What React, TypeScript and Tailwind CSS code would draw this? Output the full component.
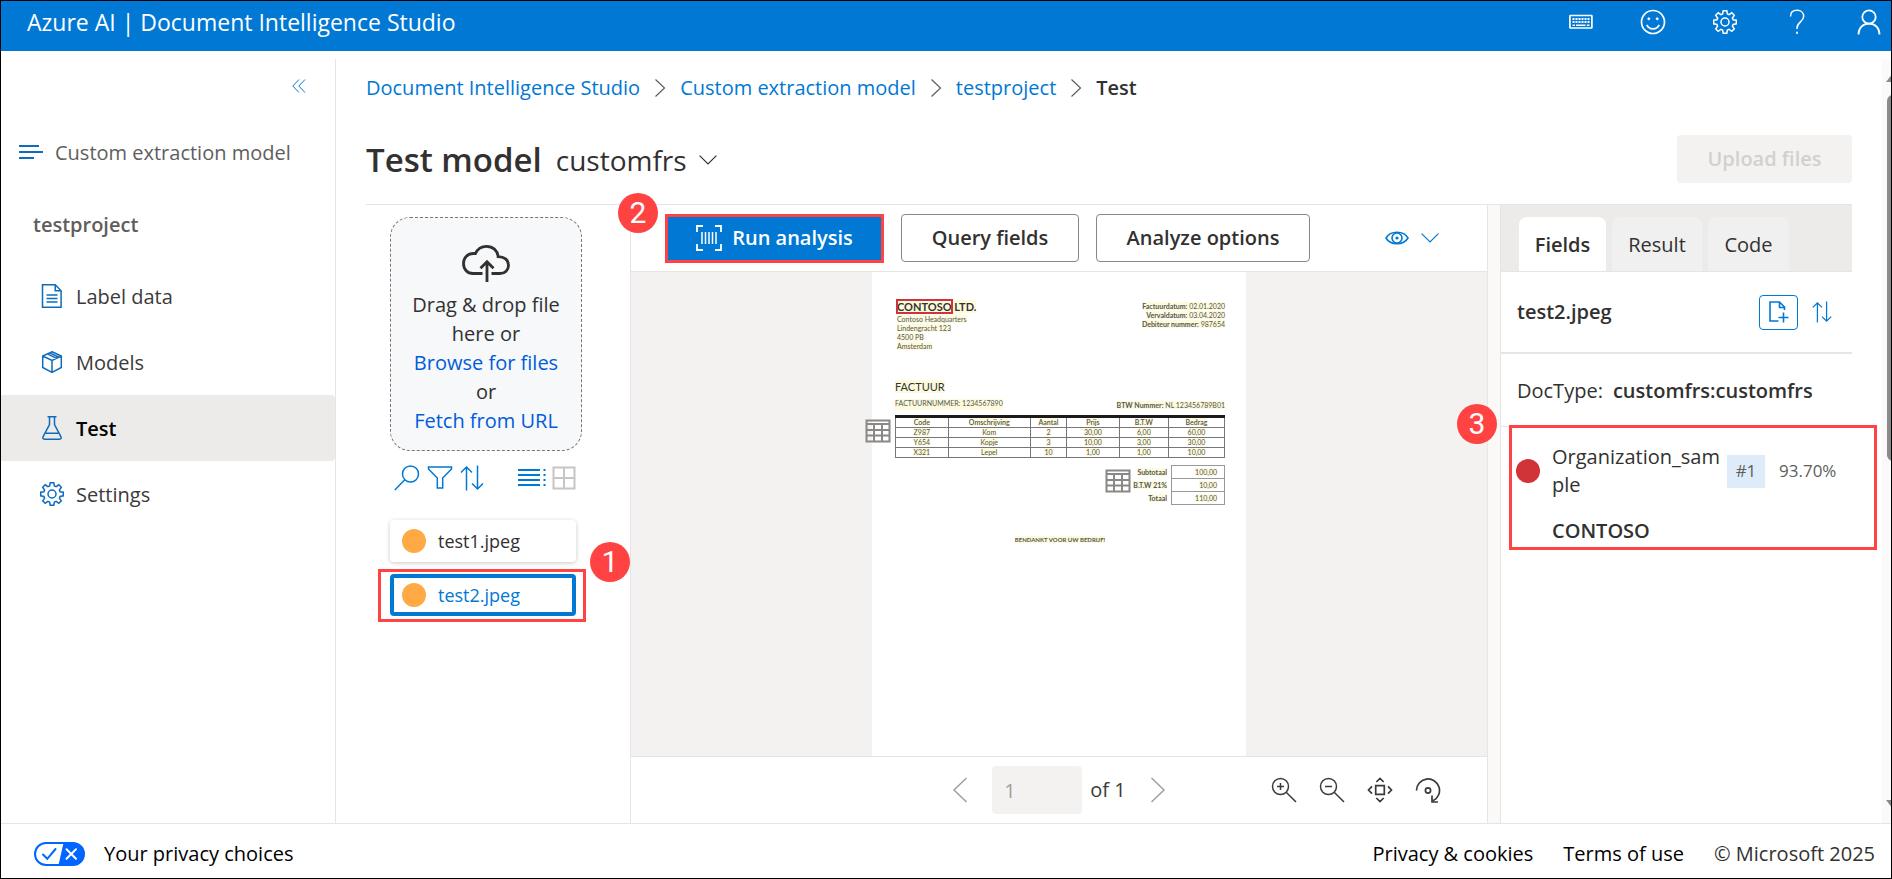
import React from 'react';

type IconProps = { className?: string };

const stroke = {
  fill: 'none',
  stroke: 'currentColor',
  strokeWidth: 1.5,
  strokeLinecap: 'butt' as const,
  strokeLinejoin: 'miter' as const,
};

const DoubleChevronLeft = () => (
  <svg width="14" height="14" viewBox="0 0 14 14" {...stroke} strokeWidth={1}>
    <path d="M7 .5.8 7 7 13.500M13 .5 6.800 7 13 13.500" />
  </svg>
);

const LinesIcon = () => (
  <svg width="24" height="16" viewBox="0 0 24 16" {...stroke} strokeWidth={2}>
    <path d="M0 1h20M0 7h24M0 13h15" />
  </svg>
);

const DocIcon = () => (
  <svg width="24" height="24" viewBox="0 0 24 24" {...stroke}>
    <path d="M2.500.8h12.700l5.900 6v16.400H2.500zM15.200.8v6h5.900M6.500 11h11M6.500 14.500h11M6.500 18h11" />
  </svg>
);

const BoxIcon = () => (
  <svg width="24" height="24" viewBox="0 0 24 24" {...stroke}>
    <path d="M12 1.800 21.300 6v11.500L12 22.300 2.700 17.500V6zM2.700 6 12 10.500 21.300 6M12 10.500v11.800M7.300 3.900l9.400 4.500M9.600 2.900l9.400 4.300" />
  </svg>
);

const FlaskIcon = () => (
  <svg width="24" height="24" viewBox="0 0 24 24" {...stroke}>
    <path d="M7.500.8h9M9.500.8v7.700L3 20.800c-.6 1.300 0 2.400 1.400 2.400h15.200c1.400 0 2-1.100 1.400-2.400L14.500 8.500V.8M5.500 17.200h13" />
  </svg>
);

const GearIcon = () => (
  <svg width="24" height="24" viewBox="0 0 24 24" {...stroke}>
    <circle cx="12" cy="12" r="4" />
    <path d="M10.200.8h3.600l.6 3.200 1.700.7 2.700-1.900 2.500 2.500-1.900 2.700.7 1.700 3.200.5v3.600l-3.200.6-.7 1.700 1.900 2.700-2.500 2.500-2.700-1.900-1.700.7-.6 3.100h-3.600l-.6-3.100-1.700-.7-2.700 1.900-2.500-2.500 1.900-2.700-.7-1.700-3.200-.6v-3.600L3.900 9.700 4.600 8 2.700 5.300l2.500-2.500 2.700 1.900L9.600 4z" />
  </svg>
);

const KeyboardIcon = () => (
  <svg width="24" height="16" viewBox="0 0 24 16" {...stroke}>
    <rect x=".9" y="1.500" width="22" height="12.500" rx=".6" strokeWidth={1.700} />
    <path d="M3.500 5h17M3.500 8h17" strokeWidth={2} strokeDasharray="2 1" />
    <path d="M3.500 11.200h2.500M7 11.200h9.500M17.800 11.200h2.700" strokeWidth={1.400} />
  </svg>
);

const SmileIcon = () => (
  <svg width="26" height="26" viewBox="0 0 26 26" {...stroke} strokeWidth={1.700}>
    <circle cx="13" cy="13" r="11.500" />
    <path d="M6.800 15.800c1.200 2.600 3.500 4 6.200 4s5-1.400 6.200-4" />
    <circle cx="8.800" cy="9.800" r="1" fill="currentColor" strokeWidth={1} />
    <circle cx="17.200" cy="9.800" r="1" fill="currentColor" strokeWidth={1} />
  </svg>
);

const HelpIcon = () => (
  <svg width="16" height="26" viewBox="0 0 16 26" {...stroke}>
    <path d="M1.500 7.500C1.500 3.800 4 1.300 8 1.300s6.700 2.500 6.700 6c0 5.300-6.700 5.900-6.700 11.700v1" />
    <path d="M8 22.800v2" strokeWidth={2} />
  </svg>
);

const PersonIcon = () => (
  <svg width="24" height="26" viewBox="0 0 24 26" {...stroke} strokeWidth={1.800}>
    <circle cx="12" cy="8" r="6.700" />
    <path d="M1.500 25.500c0-6.300 4.300-10.800 10.500-10.800s10.500 4.500 10.500 10.800" />
  </svg>
);

const CloudUpIcon = () => (
  <svg width="50" height="38" viewBox="0 0 50 38" {...stroke} strokeWidth={2.800}>
    <path d="M21.500 29.500H12C6.500 29.500 2.500 25.300 2.500 19.500 2.500 13.800 6.800 9.500 12.500 9.500h2C16.500 5 20.500 2.300 25.500 2.300c6.300 0 11 4.200 11.600 10.300 6.200 0 10.400 3.400 10.400 8.600 0 4.900-3.600 8.300-8.500 8.300h-8.500" />
    <path d="M26 38V18M19.500 24.300l6.500-6.500 6.500 6.500" />
  </svg>
);

const SearchIcon = () => (
  <svg width="26" height="26" viewBox="0 0 26 26" {...stroke}>
    <circle cx="16.500" cy="9" r="8" />
    <path d="M10.800 14.800.8 25" />
  </svg>
);

const FilterIcon = () => (
  <svg width="26" height="26" viewBox="0 0 26 26" {...stroke}>
    <path d="M1.500 2h23v2l-8.800 9v10h-5.400V13L1.500 4z" />
  </svg>
);

const SortIcon = ({ className }: IconProps) => (
  <svg className={className} viewBox="0 0 24 26" {...stroke}>
    <path d="M6.500 25.500V2M1 7.500 6.500 2 12 7.500M17.500.5V24M12 18.500l5.500 5.500 5.500-5.500" />
  </svg>
);

const ListIcon = () => (
  <svg width="28" height="24" viewBox="0 0 28 24" {...stroke} strokeWidth={2}>
    <path d="M0 4h22M0 9h22M0 14h22M0 19h22" />
    <path d="M26.500 3v18" strokeDasharray="2 3" />
  </svg>
);

const GridIcon = () => (
  <svg width="24" height="24" viewBox="0 0 24 24" {...stroke} strokeWidth={2}>
    <path d="M1.500 1.500h21v21h-21zM12 1.500v21M1.500 12h21" />
  </svg>
);

const ScanIcon = () => (
  <svg width="26" height="26" viewBox="0 0 26 26" {...stroke} strokeWidth={1.800}>
    <path d="M7 1H1v6M19 1h6v6M7 25H1v-6M19 25h6v-6" />
    <path d="M6 7v12M9.500 7v12M13 7v12M16.500 7v12M20 7v12" strokeWidth={1.500} />
  </svg>
);

const EyeIcon = () => (
  <svg width="24" height="16" viewBox="0 0 24 16" {...stroke} strokeWidth={1.600}>
    <path d="M1 8C3.200 4.200 7.200 2.300 12 2.300S20.800 4.200 23 8c-2.200 3.800-6.200 5.700-11 5.700S3.200 11.800 1 8z" />
    <circle cx="12" cy="8" r="5" />
    <circle cx="12" cy="8" r="1.600" fill="currentColor" stroke="none" />
  </svg>
);

const ChevronDown = () => (
  <svg width="18" height="10" viewBox="0 0 18 10" {...stroke} strokeWidth={1.200}>
    <path d="m.6.6 8.400 8.400 8.400-8.400" />
  </svg>
);

const ChevronRight = () => (
  <svg width="12" height="18" viewBox="0 0 12 18" {...stroke} strokeWidth={1.200}>
    <path d="m1.500.5 9 8.500-9 8.500" />
  </svg>
);

const PageLeft = () => (
  <svg width="16" height="26" viewBox="0 0 16 26" {...stroke}>
    <path d="M14.500 1 2 13l12.500 12" />
  </svg>
);

const PageRight = () => (
  <svg width="16" height="26" viewBox="0 0 16 26" {...stroke}>
    <path d="m1.500 1 12.500 12L1.500 25" />
  </svg>
);

const ZoomIcon = ({ plus }: { plus?: boolean }) => (
  <svg width="26" height="26" viewBox="0 0 26 26" {...stroke}>
    <circle cx="9.500" cy="9.500" r="8" />
    <path d="m15.200 15.200 9.800 9.800M6 9.500h7" />
    {plus && <path d="M9.500 6v7" />}
  </svg>
);

const FitIcon = () => (
  <svg width="26" height="26" viewBox="0 0 26 26" {...stroke} strokeWidth={1.700}>
    <path d="M8.700 8.700h8.600v8.600H8.700zM9.300 5 13 1.500 16.700 5M9.300 21l3.700 3.500 3.700-3.500M5 9.300 1.500 13 5 16.700M21 9.300l3.500 3.700-3.500 3.700" />
  </svg>
);

const RotateIcon = () => (
  <svg width="26" height="26" viewBox="0 0 26 26" {...stroke} strokeWidth={1.700}>
    <path d="M1.500 13.500a11.500 11.500 0 1 1 16.500 10.300M17 18.500V25h6" />
    <circle cx="13" cy="13.500" r="2.600" />
  </svg>
);

const AddPageIcon = () => (
  <svg width="20" height="22" viewBox="0 0 20 22" {...stroke} strokeWidth={1.600}>
    <path d="M9.500 20H1V1h9.500l5 5v3M10.500 1v5.500h5M14.500 11.500v10M9.500 16.500h10" />
  </svg>
);

const TableIcon = () => (
  <svg width="26" height="24" viewBox="0 0 26 24" {...stroke} strokeWidth={2} className="text-[#8a8886]">
    <path d="M1.500 1.500h23v21h-23zM1.500 5h23M1.500 11h23M1.500 16.500h23M9 5v17.500M17 5v17.500" />
  </svg>
);

const PrivacyIcon = () => (
  <svg width="51" height="24" viewBox="0 0 51 24">
    <rect x="1" y="1" width="49" height="22" rx="11" fill="#fff" stroke="#06f" strokeWidth="2" />
    <path d="M29.500 1H39a11 11 0 0 1 0 22H24.500z" fill="#06f" />
    <path d="m9 12.500 4.300 4.300L21.500 7" fill="none" stroke="#06f" strokeWidth="2" strokeLinecap="round" />
    <path d="m32.500 7.200 9.500 9.600M42 7.200l-9.500 9.600" stroke="#fff" strokeWidth="2" strokeLinecap="round" />
  </svg>
);

const Badge = ({ n, className }: { n: number; className: string }) => (
  <span
    className={`absolute z-10 flex size-10 items-center justify-center rounded-full bg-[#ff4343] font-['Roboto',sans-serif] text-[30px] leading-none text-white ${className}`}
  >
    {n}
  </span>
);

const navItems = [
  { label: 'Label data', icon: <DocIcon /> },
  { label: 'Models', icon: <BoxIcon /> },
  { label: 'Test', icon: <FlaskIcon />, active: true },
  { label: 'Settings', icon: <GearIcon /> },
];

const Sidebar = () => (
  <aside className="mt-2 flex w-[335px] shrink-0 flex-col border-r border-[#e5e5e5]">
    <div className="flex justify-end pt-5 pr-[29px]">
      <button aria-label="Collapse" className="text-[#0078d4]">
        <DoubleChevronLeft />
      </button>
    </div>
    <div className="mt-9 flex h-12 items-center gap-3 pl-[18px] text-[#0f6cbd]">
      <LinesIcon />
      <span className="text-[#605e5c]">Custom extraction model</span>
    </div>
    <div className="mt-6 flex h-12 items-center pl-8 font-semibold text-[#605e5c]">testproject</div>
    <nav className="mt-[14px]">
      {navItems.map((item) => (
        <a
          key={item.label}
          href="#"
          className={
            item.active
              ? 'flex h-[66px] items-center gap-3 rounded-r-sm bg-[#edebe9] pl-[39px] font-semibold text-black'
              : 'flex h-[66px] items-center gap-3 pl-[39px] text-[#3b3a39]'
          }
        >
          <span className="text-[#0f6cbd]">{item.icon}</span>
          <span className="pt-0.5">{item.label}</span>
        </a>
      ))}
    </nav>
  </aside>
);

const FilePanel = () => (
  <section className="w-[264px] shrink-0 pt-3 pl-6">
    <div className="flex h-[234px] w-[192px] flex-col items-center rounded-[20px] border border-dashed border-[#797775] bg-[#f6f8fa] pt-[26px] text-center leading-[29px] text-[#323130]">
      <CloudUpIcon />
      <p className="mt-2">
        Drag &amp; drop file
        <br />
        here or
      </p>
      <a href="#" className="text-[#015cda]">Browse for files</a>
      <p>or</p>
      <a href="#" className="text-[#015cda]">Fetch from URL</a>
    </div>
    <div className="mt-[14px] flex w-[186px] items-center justify-between pl-1 text-[#0078d4]">
      <div className="flex gap-[7px]">
        <button aria-label="Search"><SearchIcon /></button>
        <button aria-label="Filter"><FilterIcon /></button>
        <button aria-label="Sort"><SortIcon className="h-[26px] w-6" /></button>
      </div>
      <div className="flex items-center gap-[6px]">
        <button aria-label="List view"><ListIcon /></button>
        <button aria-label="Grid view" className="text-[#c8c6c4]"><GridIcon /></button>
      </div>
    </div>
    <ul className="mt-[29px] flex w-[186px] flex-col gap-3 text-[18px]">
      <li>
        <button className="flex h-[42px] w-full items-center gap-3 rounded-sm px-3 text-[#323130] shadow-[0_1px_4px_rgba(0,0,0,0.22)]">
          <span className="size-6 rounded-full bg-[#ffaa44]" />
          test1.jpeg
        </button>
      </li>
      <li className="relative">
        <button className="flex h-[42px] w-full items-center gap-3 rounded-sm border-4 border-[#0078d4] px-2 text-[#0078d4]">
          <span className="size-6 rounded-full bg-[#ffaa44]" />
          test2.jpeg
        </button>
        <span className="absolute -top-[5px] -right-[10px] -bottom-[6px] -left-3 border-3 border-[#ff4343]" />
        <Badge n={1} className="-top-8 left-[200px]" />
      </li>
    </ul>
  </section>
);

const Mark = ({ children }: { children: React.ReactNode }) => <span className="bg-[#fdfbdc]">{children}</span>;

const invoiceRows = [
  ['Z987', 'Kom', '2', '30,00', '6,00', '60,00'],
  ['Y654', 'Kopje', '3', '10,00', '3,00', '30,00'],
  ['X321', 'Lepel', '10', '1,00', '1,00', '10,00'],
];

const totals = [
  ['Subtotaal', '100,00'],
  ['B.T.W 21%', '10,00'],
  ['Totaal', '110,00'],
];

const Invoice = () => (
  <article className="flex w-[374px] flex-col bg-white pr-[21px] pl-[23px] font-['Lato',sans-serif] text-[7px] leading-[9px] text-[#555]">
    <div className="flex justify-between pt-7">
      <div>
        <h2 className="pl-0.5 text-[11px] leading-[13px] font-bold text-[#333]">
          <Mark>
            <span className="outline-2 -outline-offset-1 outline-[#d13438]">CONTOSO</span> LTD.
          </Mark>
        </h2>
        <address className="mt-0.5 pl-0.5 not-italic">
          <Mark>Contoso Headquarters</Mark>
          <br />
          <Mark>Lindengracht 123</Mark>
          <br />
          <Mark>4500 PB</Mark>
          <br />
          <Mark>Amsterdam</Mark>
        </address>
      </div>
      <div className="pt-0.5 text-right">
        <Mark><b>Factuurdatum:</b> 02.01.2020</Mark>
        <br />
        <Mark><b>Vervaldatum:</b> 03.04.2020</Mark>
        <br />
        <Mark><b>Debiteur nummer:</b> 987654</Mark>
      </div>
    </div>
    <h3 className="mt-7 text-[11px] leading-4 text-[#333]"><Mark>FACTUUR</Mark></h3>
    <div className="mt-1 flex justify-between">
      <Mark>FACTUURNUMMER: 1234567890</Mark>
      <span className="pt-0.5"><Mark><b>BTW Nummer:</b> NL 123456789B01</Mark></span>
    </div>
    <div className="relative mt-[5px]">
      <table className="w-full table-fixed border-collapse border border-[#777] text-center text-[7px] leading-[9px]">
        <colgroup>
          <col className="w-[16%]" />
          <col className="w-[25%]" />
          <col className="w-[11%]" />
          <col className="w-[16%]" />
          <col className="w-[15%]" />
          <col className="w-[17%]" />
        </colgroup>
        <thead>
          <tr className="border-t-3 border-[#1b1b1b]">
            {['Code', 'Omschrijving', 'Aantal', 'Prijs', 'B.T.W', 'Bedrag'].map((h) => (
              <th key={h} className="border-x border-b border-x-[#777] border-b-[#777] p-0 font-semibold"><Mark>{h}</Mark></th>
            ))}
          </tr>
        </thead>
        <tbody>
          {invoiceRows.map((row) => (
            <tr key={row[0]}>
              {row.map((cell, i) => (
                <td key={i} className="border border-[#777] p-0"><Mark>{cell}</Mark></td>
              ))}
            </tr>
          ))}
        </tbody>
      </table>
      <span className="absolute top-1 -left-[30px]"><TableIcon /></span>
    </div>
    <div className="mt-[7px] flex items-start justify-end gap-[2px]">
      <span className="pt-1"><TableIcon /></span>
      <table className="border-collapse text-right leading-3">
        <tbody>
          {totals.map(([label, value]) => (
            <tr key={label}>
              <th className="p-0 pr-1 font-bold"><Mark>{label}</Mark></th>
              <td className="w-[53px] border border-[#999] p-0 pr-[7px]"><Mark>{value}</Mark></td>
            </tr>
          ))}
        </tbody>
      </table>
    </div>
    <p className="mt-[30px] text-center text-[6px] font-bold"><Mark>BENDANKT VOOR UW BEDRIJF!</Mark></p>
  </article>
);

const Viewer = () => (
  <section className="relative flex min-w-0 flex-1 flex-col border-x border-[#e5e5e5]">
    <div className="flex h-[67px] items-center gap-[17px] border-b border-[#e5e5e5] pr-12 pl-[34px] font-semibold">
      <button className="flex h-[49px] w-[219px] items-center justify-center gap-[10px] border-3 border-[#ff4343] bg-[#0078d4] text-white">
        <ScanIcon />
        Run analysis
      </button>
      <button className="h-12 w-[178px] rounded-sm border border-[#8a8886] text-[#323130]">Query fields</button>
      <button className="h-12 w-[214px] rounded-sm border border-[#8a8886] text-[#323130]">Analyze options</button>
      <button aria-label="View options" className="ml-auto flex items-center gap-3 text-[#0078d4]">
        <EyeIcon />
        <ChevronDown />
      </button>
    </div>
    <Badge n={2} className="-top-3 -left-[13px]" />
    <div className="flex flex-1 justify-center bg-[#f3f2f1]">
      <Invoice />
    </div>
    <div className="relative flex h-[67px] items-center justify-center border-t border-[#e5e5e5]">
      <div className="flex items-center text-[#3b3a39]">
        <button aria-label="Previous page" className="text-[#a19f9d]"><PageLeft /></button>
        <input
          aria-label="Page"
          defaultValue="1"
          disabled
          className="ml-6 h-12 w-[90px] rounded-sm bg-[#f3f2f1] px-3 text-[#a19f9d]"
        />
        <span className="ml-2">of 1</span>
        <button aria-label="Next page" className="ml-6 text-[#a19f9d]"><PageRight /></button>
      </div>
      <div className="absolute right-[46px] flex gap-[22px] text-[#3b3a39]">
        <button aria-label="Zoom in"><ZoomIcon plus /></button>
        <button aria-label="Zoom out"><ZoomIcon /></button>
        <button aria-label="Fit to page"><FitIcon /></button>
        <button aria-label="Rotate"><RotateIcon /></button>
      </div>
    </div>
  </section>
);

const ResultPanel = () => (
  <section className="w-[352px] shrink-0 border-l border-[#e5e5e5] text-[#323130]">
    <div role="tablist" className="flex h-[67px] items-end gap-[6px] border-b border-[#e5e5e5] bg-[#edebe9] pl-[18px]">
      <button role="tab" aria-selected="true" className="h-[54px] w-[87px] rounded-t-lg bg-white pt-0.5 font-semibold">Fields</button>
      <button role="tab" aria-selected="false" className="h-[54px] w-[90px] rounded-t-lg bg-[#f0f0f0] pt-0.5">Result</button>
      <button role="tab" aria-selected="false" className="h-[54px] w-[81px] rounded-t-lg bg-[#f0f0f0] pt-0.5">Code</button>
    </div>
    <div className="flex h-[82px] items-center border-b-2 border-[#e5e5e5] pr-5 pl-4">
      <span className="flex-1 font-semibold">test2.jpeg</span>
      <button aria-label="Add field" className="flex h-[35px] w-[39px] items-center justify-center rounded-sm border border-[#0078d4] text-[#0078d4]">
        <AddPageIcon />
      </button>
      <button aria-label="Sort" className="ml-[14px] text-[#0078d4]">
        <SortIcon className="h-[22px] w-5" />
      </button>
    </div>
    <div className="flex h-[73px] items-center gap-[10px] border-b border-[#e5e5e5] pt-0.5 pl-4">
      <span>DocType:</span>
      <span className="font-semibold">customfrs:customfrs</span>
    </div>
    <div className="relative pt-4 pl-[15px]">
      <div className="flex items-center">
        <span className="size-6 shrink-0 rounded-full bg-[#d13438]" />
        <span className="ml-3 w-[168px] leading-7 break-all">Organization_sample</span>
        <span className="ml-[7px] flex h-[33px] w-[38px] items-center justify-center bg-[#deecf9] text-[17px] text-[#605e5c]">#1</span>
        <span className="ml-[14px] text-[17px] text-[#605e5c]">93.70%</span>
      </div>
      <div className="mt-[18px] pl-9 leading-7 font-semibold">CONTOSO</div>
      <span className="absolute -top-[2px] -right-[25px] left-2 h-[125px] border-3 border-[#ff4343]" />
      <Badge n={3} className="-top-[23px] -left-[44px]" />
    </div>
  </section>
);

export default function App() {
  return (
    <div className="flex min-h-screen flex-col overflow-hidden border border-black bg-white font-['Open_Sans','Noto_Sans',sans-serif] text-[20px] leading-7 text-[#323130]">
      <header className="flex h-[50px] items-center justify-between bg-[#0078d4] pr-[10px] pb-2 pl-[26px] text-white">
        <h1 className="text-[23px]">Azure AI | Document Intelligence Studio</h1>
        <div className="flex items-center">
          <button aria-label="Keyboard shortcuts" className="flex w-[72px] justify-center"><KeyboardIcon /></button>
          <button aria-label="Feedback" className="flex w-[72px] justify-center"><SmileIcon /></button>
          <button aria-label="Settings" className="flex w-[72px] justify-center"><GearIcon /></button>
          <button aria-label="Help" className="flex w-[72px] justify-center"><HelpIcon /></button>
          <button aria-label="Account" className="ml-6 flex w-6 justify-center"><PersonIcon /></button>
        </div>
      </header>

      <div className="flex flex-1">
        <Sidebar />
        <main className="flex min-w-0 flex-1 flex-col pl-[30px]">
          <nav aria-label="Breadcrumb" className="mt-[23px] flex items-center gap-[14px] text-[#0078d4]">
            <a href="#">Document Intelligence Studio</a>
            <span className="text-[#605e5c]"><ChevronRight /></span>
            <a href="#">Custom extraction model</a>
            <span className="text-[#605e5c]"><ChevronRight /></span>
            <a href="#">testproject</a>
            <span className="text-[#605e5c]"><ChevronRight /></span>
            <span className="font-semibold text-[#323130]">Test</span>
          </nav>
          <div className="mt-[33px] mr-[30px] flex h-12 items-center">
            <h2 className="pt-0.5 text-[33px] font-semibold">Test model</h2>
            <button className="ml-[14px] flex items-center gap-3 pt-0.5 text-[28px]">
              customfrs
              <ChevronDown />
            </button>
            <button disabled className="ml-auto h-12 w-[175px] rounded-sm bg-[#f3f2f1] font-semibold text-[#d2d0ce]">Upload files</button>
          </div>
          <div className="mt-[21px] mr-[30px] flex flex-1 border-t border-[#e5e5e5]">
            <FilePanel />
            <Viewer />
            <div className="w-3 shrink-0 bg-[#faf9f8]" />
            <ResultPanel />
          </div>
        </main>
        <div aria-hidden="true" className="relative mt-2 w-[9px] shrink-0 overflow-hidden bg-[#fafafa]">
          <svg width="14" height="9" viewBox="0 0 14 9" className="absolute top-[14px] left-1 fill-[#8a8a8a]"><path d="M0 9 7 0l7 9z" /></svg>
          <div className="absolute top-9 left-[5px] h-[366px] w-3 rounded-md bg-[#8a8a8a]" />
          <svg width="14" height="9" viewBox="0 0 14 9" className="absolute bottom-[14px] left-1 fill-[#8a8a8a]"><path d="m0 0 7 9 7-9z" /></svg>
        </div>
      </div>

      <footer className="flex h-[55px] items-center border-t border-[#e5e5e5] pt-[5px] pr-4 pl-[33px] text-black">
        <PrivacyIcon />
        <a href="#" className="ml-[19px]">Your privacy choices</a>
        <a href="#" className="ml-auto">Privacy &amp; cookies</a>
        <a href="#" className="ml-[30px]">Terms of use</a>
        <span className="ml-[30px] text-[#323130]">© Microsoft 2025</span>
      </footer>
    </div>
  );
}
